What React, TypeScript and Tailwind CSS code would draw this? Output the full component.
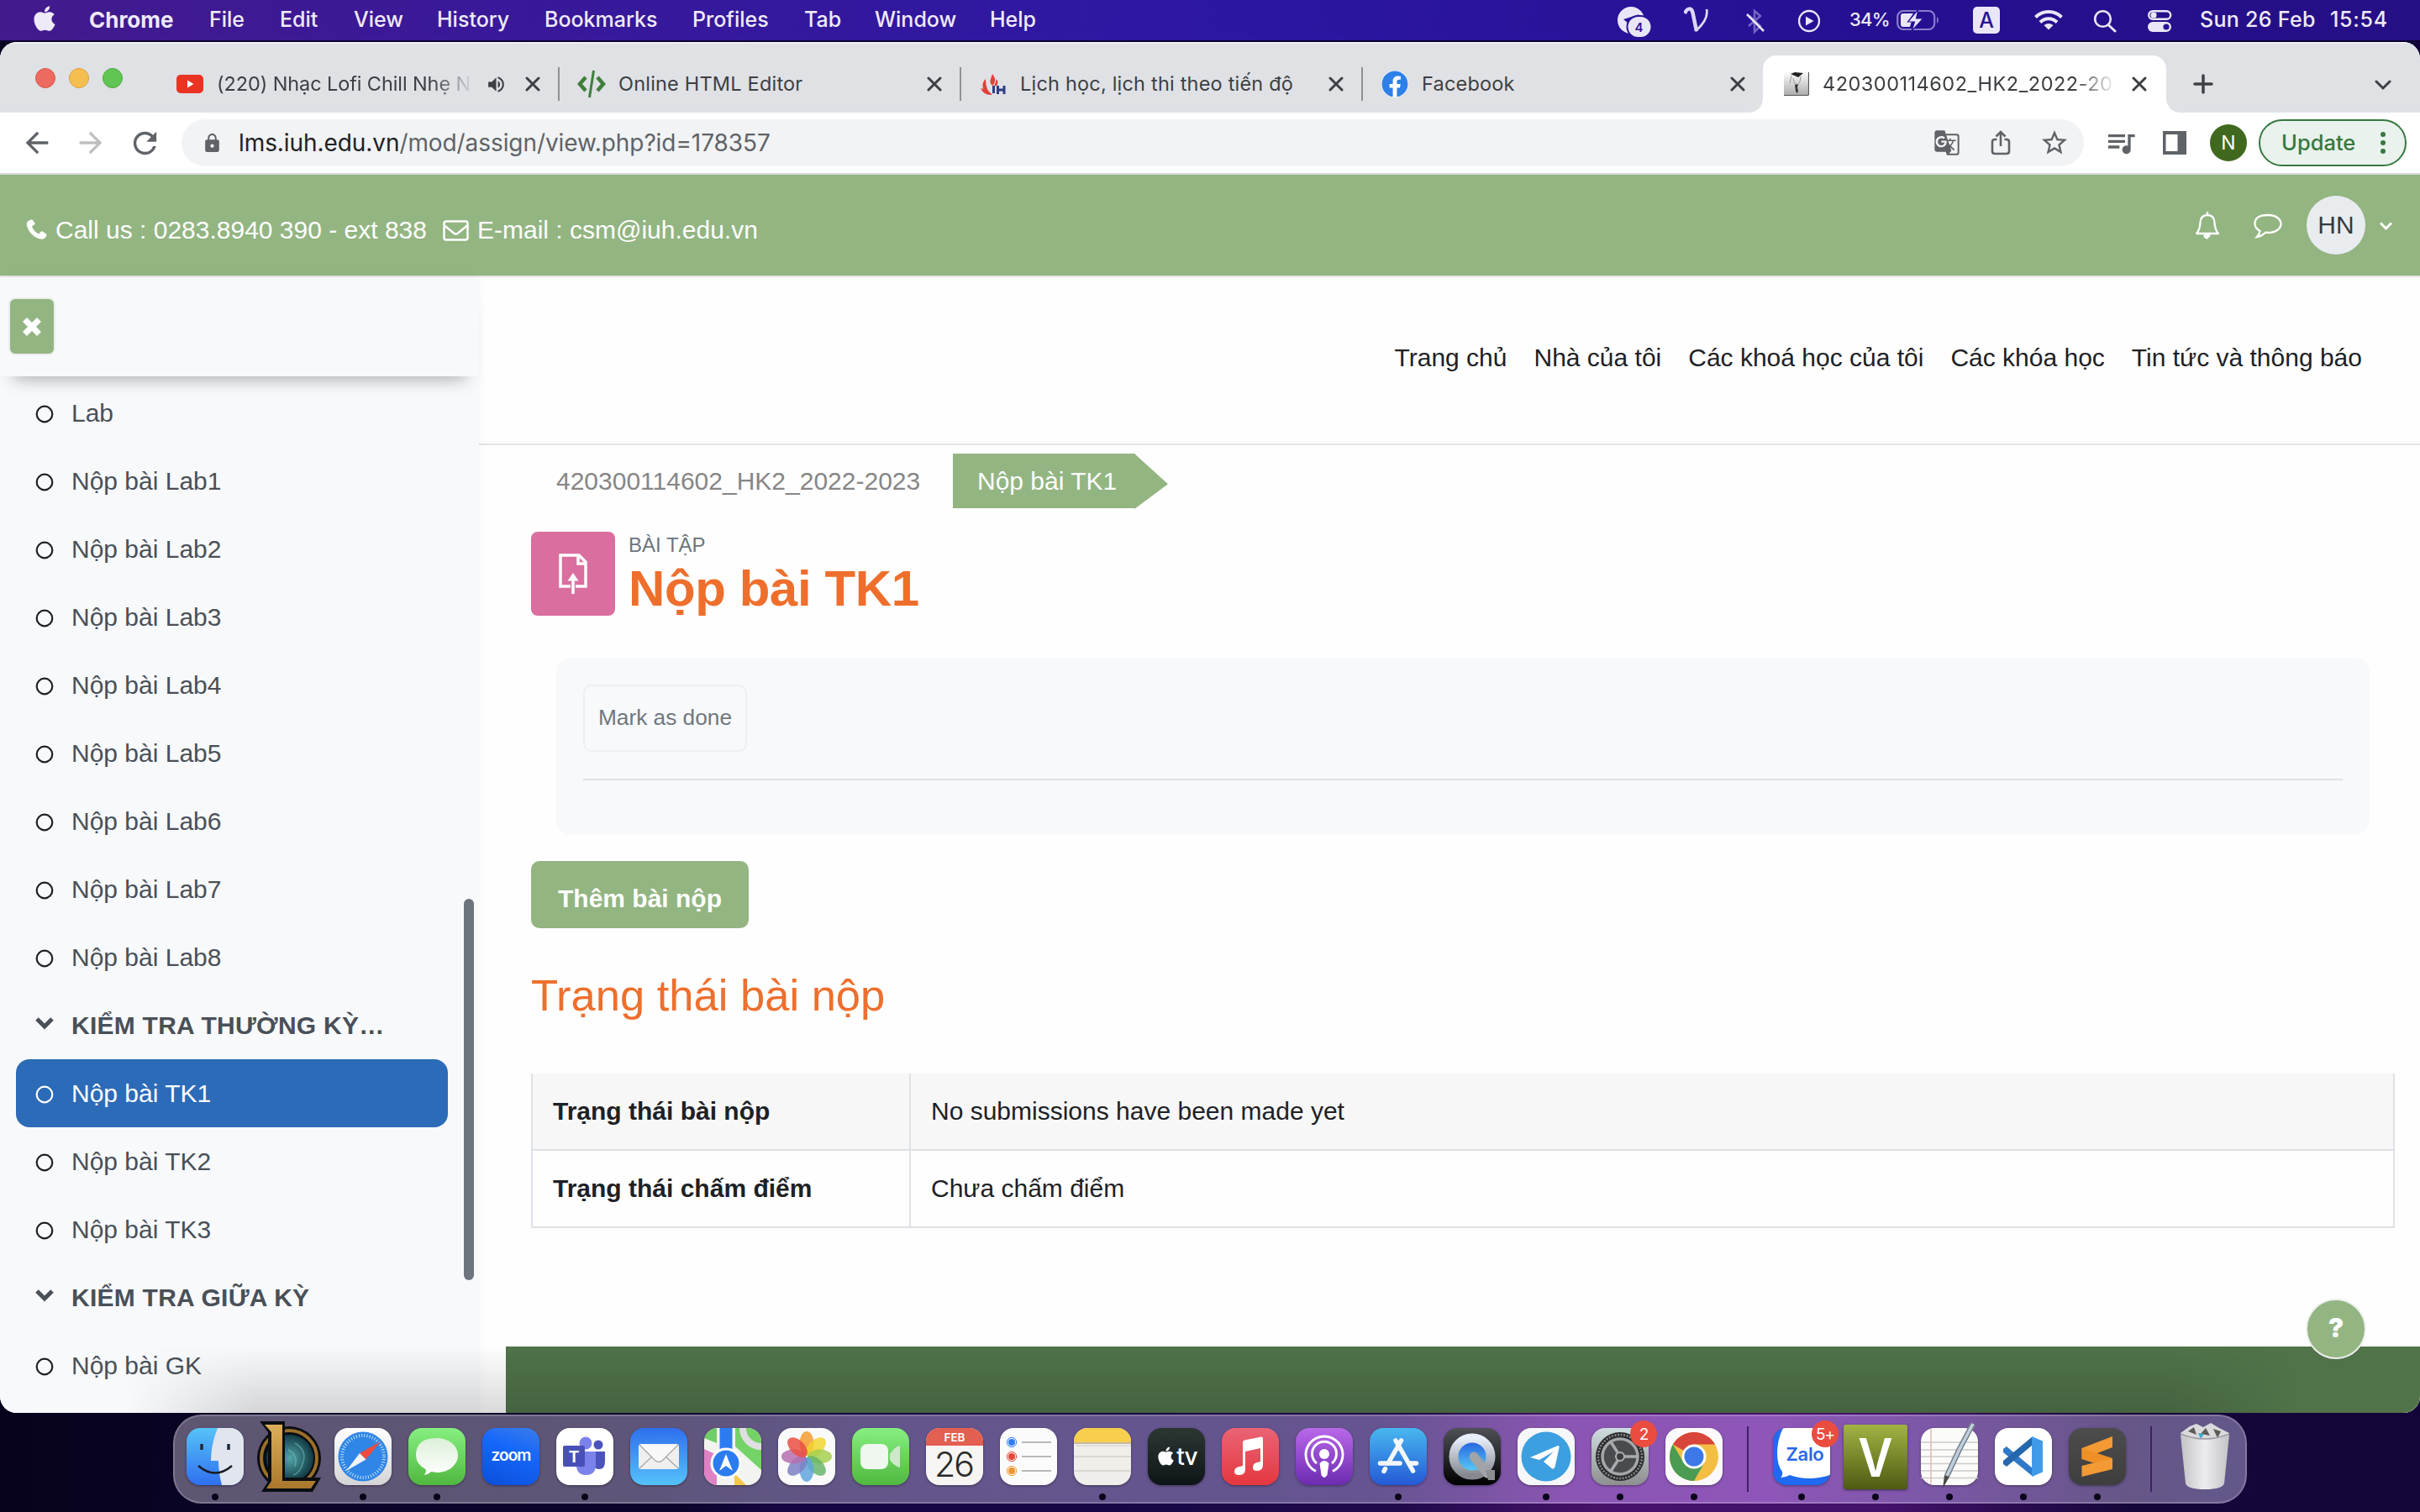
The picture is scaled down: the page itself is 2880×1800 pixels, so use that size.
import type { ReactNode } from "react";
import { FaApple, FaFacebook } from "react-icons/fa";
import { MdArrowBack, MdArrowForward, MdGTranslate, MdLock, MdQueueMusic, MdRefresh, MdStarBorder, MdVolumeUp } from "react-icons/md";

/* ---------- macOS menu bar ---------- */

const menus: { label: string; cls: string }[] = [
  { label: "File", cls: "w-[84px]" },
  { label: "Edit", cls: "w-[88px]" },
  { label: "View", cls: "w-[99px]" },
  { label: "History", cls: "w-[128px]" },
  { label: "Bookmarks", cls: "w-[176px]" },
  { label: "Profiles", cls: "w-[133px]" },
  { label: "Tab", cls: "w-[84px]" },
  { label: "Window", cls: "w-[137px]" },
  { label: "Help", cls: "w-[80px]" },
];

function MenuBar() {
  return (
    <header className="flex h-[50px] shrink-0 items-center border-b-2 border-[#0c0330] bg-[linear-gradient(90deg,#421a8c_0%,#3a1998_18%,#2c17a3_50%,#261093_75%,#250f85_100%)] pb-px font-['Inter'] text-[25px] font-medium leading-[47px] text-[#efeaf8]">
      <FaApple className="ml-[37px] -mt-[4px] h-[34px] w-[32px]" />
      <span className="ml-[37px] w-[143px] text-[26px] font-bold">Chrome</span>
      {menus.map((m) => (
        <span key={m.label} className={"whitespace-nowrap " + m.cls}>
          {m.label}
        </span>
      ))}
      <div className="ml-auto flex items-center">
        <svg className="h-[48px] w-[44px]" viewBox="0 0 44 48">
          <circle cx="17" cy="24" r="16" fill="#ebe6f7" />
          <path d="M8 23 27 17 21 22 14 28z" fill="#29149a" />
          <rect x="12.500" y="19" width="29" height="26" rx="13" fill="#ebe6f7" stroke="#29149a" strokeWidth="2" />
          <text x="26.500" y="37.500" fontSize="15" fontWeight="600" textAnchor="middle" fill="#29149a" fontFamily="Inter">4</text>
        </svg>
        <svg className="ml-[36px] h-[48px] w-[30px]" viewBox="0 0 30 48" fill="none" stroke="#ded6f5">
          <path d="M1 16C4 9 9 9 10.500 15L15 37" strokeWidth="4.500" />
          <path d="M14 37C23 29 29 20 27 11" strokeWidth="2.800" />
        </svg>
        <svg className="ml-[44px] h-[48px] w-[22px]" viewBox="0 0 22 48" fill="none" strokeWidth="2.500">
          <path d="M4 19 17 31 10 38V13l7 6L3 31" stroke="#7466c4" />
          <path d="M1 17 21 37" stroke="#ebe6f7" />
        </svg>
        <svg className="ml-[40px] h-[48px] w-[26px]" viewBox="0 0 26 48">
          <circle cx="13" cy="25" r="12" fill="none" stroke="#ebe6f7" strokeWidth="2.400" />
          <path d="M9 19.500 18.500 25 9 30.500z" fill="#ebe6f7" />
        </svg>
        <span className="ml-[35px] w-[56px] text-[22px] tracking-[-0.7px]">34%</span>
        <svg className="h-[48px] w-[52px]" viewBox="0 0 52 48">
          <rect x="1.200" y="13" width="44" height="22" rx="7" fill="none" stroke="#8a7ccd" strokeWidth="2.200" />
          <path d="M48 20q4 4 0 8z" fill="#8a7ccd" />
          <path d="M8 16h12l-6 9h4l-2 7H8q-3 0-3-3V19q0-3 3-3z" fill="#ebe6f7" />
          <path d="M26 11 13.500 26h8L18 37 31.500 22h-8z" fill="#ebe6f7" stroke="#29149a" strokeWidth="1.200" />
        </svg>
        <span className="ml-[39px] flex size-8 items-center justify-center rounded-[5px] bg-[#ebe6f7] text-[25px] leading-8 text-[#27128f]">A</span>
        <svg className="ml-[40px] h-[48px] w-[36px]" viewBox="0 0 36 48" fill="none" stroke="#ebe6f7" strokeWidth="4">
          <path d="M2.500 20.500a22 22 0 0 1 31 0M8 26.500a14 14 0 0 1 20 0" />
          <path d="M12.500 30q5.500-4 11 0L18 35.500z" fill="#ebe6f7" stroke="none" />
        </svg>
        <svg className="ml-[35px] h-[48px] w-[28px]" viewBox="0 0 28 48" fill="none" stroke="#ebe6f7" strokeWidth="2.600">
          <circle cx="11.500" cy="22.500" r="9.300" />
          <path d="m18 29.500 8 7.500" strokeLinecap="round" strokeWidth="3" />
        </svg>
        <svg className="ml-[36px] h-[48px] w-[30px]" viewBox="0 0 30 48">
          <rect x="2.200" y="13.200" width="26" height="9.600" rx="4.800" fill="none" stroke="#ebe6f7" strokeWidth="2.400" />
          <circle cx="8" cy="18" r="3.600" fill="#ebe6f7" />
          <rect x="1" y="26" width="28" height="12" rx="6" fill="#ebe6f7" />
          <circle cx="23" cy="32" r="3.600" fill="#2a149a" />
        </svg>
        <span className="ml-[33px] w-[155px] whitespace-nowrap tracking-[0.3px]">Sun 26 Feb</span>
        <span className="w-[107px] whitespace-nowrap tracking-[0.7px]">15:54</span>
      </div>
    </header>
  );
}

/* ---------- Chrome tab strip and toolbar ---------- */

function Cross() {
  return (
    <svg className="size-[18px] shrink-0" viewBox="0 0 18 18" stroke="#3c4043" strokeWidth="3" strokeLinecap="round">
      <path d="m2 2 14 14M16 2 2 16" />
    </svg>
  );
}

function Tab({ icon, title, fade, audio }: { icon: ReactNode; title: string; fade?: boolean; audio?: boolean }) {
  return (
    <div className="flex h-full w-[478px] items-center pl-[23px] pr-[22px]">
      <span className="flex size-8 shrink-0 items-center justify-center">{icon}</span>
      <span
        className={
          "ml-[16px] min-w-0 flex-1 whitespace-nowrap " +
          (fade ? "tracking-[-0.1px] [mask-image:linear-gradient(90deg,#000_calc(100%-50px),transparent)]" : "tracking-[0.2px]")
        }
      >
        {title}
      </span>
      {audio && <MdVolumeUp className="ml-[14px] mr-[22px] size-[25px] shrink-0 text-[#3c4043]" />}
      <span className={audio ? "flex" : "ml-[17px] flex"}>
        <Cross />
      </span>
    </div>
  );
}

const Divider = () => <span className="-mx-px h-10 w-[2px] bg-[#8f9195]" />;

function TabStrip() {
  return (
    <div className="flex h-[84px] shrink-0 border-t-2 border-[#f0f1f3] bg-[#dfe1e5] font-['Inter'] text-[23.5px] text-[#3c4043]">
      <div className="flex w-[187px] items-start gap-4 pl-[42px] pt-[29px]">
        <span className="size-6 rounded-full border border-[#d65a50] bg-[#ed6a5f]" />
        <span className="size-6 rounded-full border border-[#d8a13f] bg-[#f5bf4f]" />
        <span className="size-6 rounded-full border border-[#52a93f] bg-[#61c554]" />
      </div>
      <div className="mt-[14px] flex h-[68px] items-center">
        <Tab
          title="(220) Nhạc Lofi Chill Nhẹ N"
          fade
          audio
          icon={
            <svg className="h-[22px] w-8" viewBox="0 0 32 22">
              <rect width="32" height="22" rx="5" fill="#ea3323" />
              <path d="M13 6.500 20.500 11 13 15.500z" fill="#fff" />
            </svg>
          }
        />
        <Divider />
        <Tab
          title="Online HTML Editor"
          icon={
            <svg className="size-8 overflow-visible" viewBox="0 0 32 32" fill="none" stroke="#3f7f3c" strokeWidth="4.500">
              <path d="m9 8-7 8 7 8M23 8l7 8-7 8" />
              <path d="M18.500 0 13.500 32" strokeWidth="3" />
            </svg>
          }
        />
        <Divider />
        <Tab
          title="Lịch học, lịch thi theo tiến độ"
          icon={
            <svg className="size-8" viewBox="0 0 32 32">
              <path d="M15 4q4 5 3 9t-3 5q-4-4-2-8zM7 10q0 12 5 16l3 3Q5 30 1 21l3 1Q2 14 7 10zM20 10q3 4 0 8l-3 1z" fill="#e2403a" />
              <rect x="15" y="18" width="3" height="9" fill="#2d3d86" />
              <path d="M21.500 18v10M29 18v10M21 23h8" stroke="#2d3d86" strokeWidth="3" />
            </svg>
          }
        />
        <Divider />
        <Tab title="Facebook" icon={<FaFacebook className="size-8 rounded-full bg-white text-[#2d80e8]" />} />
        <div className="relative -ml-px flex h-[68px] w-[480px] items-center rounded-t-[16px] bg-white pl-[25px] pr-[23px]">
          <span className="absolute -left-4 bottom-0 size-4 bg-[radial-gradient(circle_at_0_0,transparent_15.5px,#fff_16px)]" />
          <span className="absolute -right-4 bottom-0 size-4 bg-[radial-gradient(circle_at_100%_0,transparent_15.5px,#fff_16px)]" />
          <svg className="h-[30px] w-[30px] shrink-0" viewBox="0 0 30 30">
            <defs>
              <linearGradient id="favicon" x2="0" y2="1">
                <stop stopColor="#fff" />
                <stop offset="1" stopColor="#aaa" />
              </linearGradient>
            </defs>
            <rect width="30" height="29" rx="2" fill="url(#favicon)" />
            <path d="M0 28.500h28q1.500 0 1.500-2V1" fill="none" stroke="#555" strokeWidth="1.200" />
            <path d="m8 3 5-2 10 1-6 5z" fill="#222" />
            <path d="M9 5 7 14M20 6q0 6-3 9M11 8q1 5 3 8" fill="none" stroke="#999" />
            <path d="m13 16 4-1-1 4 1 5-2 2-1-3z" fill="#333" />
          </svg>
          <span className="ml-[16px] w-[350px] whitespace-nowrap tracking-[0.5px] [mask-image:linear-gradient(90deg,#000_calc(100%-50px),transparent)]">
            420300114602_HK2_2022-20
          </span>
          <span className="ml-auto flex">
            <Cross />
          </span>
        </div>
      </div>
      <svg className="ml-[32px] mt-[36px] size-6" viewBox="0 0 24 24" stroke="#3c4043" strokeWidth="3.500" strokeLinecap="round">
        <path d="M12 2v20M2 12h20" />
      </svg>
      <svg className="ml-auto mr-[34px] mt-[42px] h-[14px] w-[20px]" viewBox="0 0 20 14" fill="none" stroke="#3c4043" strokeWidth="3" strokeLinecap="round">
        <path d="m2 3 8 8 8-8" />
      </svg>
    </div>
  );
}

function Toolbar() {
  return (
    <div className="flex h-[74px] shrink-0 items-center border-b-2 border-[#d9dadb] bg-white pr-[16px] font-['Inter'] text-[#5f6368]">
      <MdArrowBack className="ml-[24px] size-[40px]" />
      <MdArrowForward className="ml-[24px] size-[40px] text-[#bdbfc1]" />
      <MdRefresh className="ml-[24px] size-[41px]" />
      <div className="ml-[23px] flex h-14 w-[2264px] items-center rounded-full bg-[#f1f3f4] pl-[24px]">
        <MdLock className="size-[25px]" />
        <span className="ml-[19px] text-[28px] leading-none tracking-[-0.08px]">
          <span className="text-[#202124]">lms.iuh.edu.vn</span>/mod/assign/view.php?id=178357
        </span>
        <MdGTranslate className="ml-auto size-[32px]" />
        <svg className="ml-[36px] h-[30px] w-[24px]" viewBox="0 0 24 30" fill="none" stroke="#5f6368" strokeWidth="2.600">
          <path d="M7.500 11H5q-3 0-3 3v11q0 3 3 3h14q3 0 3-3V14q0-3-3-3h-2.500M12 19V3M6.500 7.500 12 2l5.500 5.500" />
        </svg>
        <MdStarBorder className="ml-[34px] mr-[17px] size-[36px]" />
      </div>
      <MdQueueMusic className="ml-[24px] size-[40px]" />
      <svg className="ml-[30px] h-7 w-7" viewBox="0 0 28 28">
        <path d="M0 0h28v28H0zM3.500 4v20H17.500V4z" fill="#5f6368" fillRule="evenodd" />
      </svg>
      <span className="ml-[28px] flex size-11 items-center justify-center rounded-full bg-[#40691f] text-[23px] text-white">N</span>
      <div className="ml-auto flex h-14 w-[176px] items-center rounded-full border-2 border-[#37783f] bg-[#e9f2ec] pl-[25px] pr-[23px] text-[25.5px] font-medium text-[#37783f]">
        Update
        <svg className="ml-auto h-[28px] w-[6px]" viewBox="0 0 6 28" fill="#37783f">
          <circle cx="3" cy="4" r="3" />
          <circle cx="3" cy="14" r="3" />
          <circle cx="3" cy="24" r="3" />
        </svg>
      </div>
    </div>
  );
}

/* ---------- LMS page ---------- */

function SiteHeader() {
  return (
    <div className="flex h-[122px] shrink-0 items-center border-b-2 border-[#e8e2e0] bg-[#93b582] text-[30px] leading-none text-white">
      <svg className="ml-[31px] mt-[10px] size-[26px]" viewBox="0 0 26 26" fill="#fff">
        <path d="M6 1.500 2.500 3Q0 5 1 9q3 11 14 15 5 2 8-1l1.500-3q.5-1-1-2l-5-3-3.500 3.500q-6-3-8-9L11 6.500 8 2Q7 1 6 1.500z" />
      </svg>
      <span className="ml-[9px] mt-[11px] whitespace-nowrap">Call us : 0283.8940 390 - ext 838</span>
      <svg className="ml-[19px] mt-[12px] h-[25px] w-[31px]" viewBox="0 0 31 25" fill="none" stroke="#fff" strokeWidth="2.500">
        <rect x="1.500" y="1.500" width="28" height="22" rx="2.500" />
        <path d="m2 6.500 11 9q2.500 2 5 0l11-9" />
      </svg>
      <span className="ml-[10px] mt-[11px] whitespace-nowrap">E-mail : csm@iuh.edu.vn</span>
      <svg className="ml-auto h-[34px] w-[30px]" viewBox="0 0 30 34" fill="none" stroke="#fff" strokeWidth="2.300">
        <path d="M2 27q4-4 4.500-13Q7 5 15 5t8.500 9q.5 9 4.500 13z" strokeLinejoin="round" />
        <path d="M15 1v4M11.500 28.500q0 4 4 4" />
        <path d="M11.500 28h7q0 4-3.500 4.500z" fill="#fff" stroke="none" />
      </svg>
      <svg className="ml-[40px] mt-[2px] h-[30px] w-[34px]" viewBox="0 0 34 30" fill="none" stroke="#fff" strokeWidth="2.300">
        <path d="M17 2c9 0 15.500 4.500 15.500 10.500S26 23 17 23l-3-.3Q10 27 4 28q3-3.500 3.500-7Q1.500 17.500 1.500 12.500 1.500 2 17 2z" />
      </svg>
      <span className="ml-[29px] flex size-[70px] items-center justify-center rounded-full bg-[#e9ecef] text-[#343a40]">HN</span>
      <svg className="ml-[17px] mr-[33px] mt-[3px] h-[11px] w-[15px]" viewBox="0 0 15 11" fill="none" stroke="#fff" strokeWidth="3">
        <path d="m1 1.500 6.500 6.500L14 1.500" />
      </svg>
    </div>
  );
}

type Entry = { label: string; kind: "item" | "section" | "active" };

const entries: Entry[] = [
  { label: "Lab", kind: "item" },
  { label: "Nộp bài Lab1", kind: "item" },
  { label: "Nộp bài Lab2", kind: "item" },
  { label: "Nộp bài Lab3", kind: "item" },
  { label: "Nộp bài Lab4", kind: "item" },
  { label: "Nộp bài Lab5", kind: "item" },
  { label: "Nộp bài Lab6", kind: "item" },
  { label: "Nộp bài Lab7", kind: "item" },
  { label: "Nộp bài Lab8", kind: "item" },
  { label: "KIỂM TRA THƯỜNG KỲ…", kind: "section" },
  { label: "Nộp bài TK1", kind: "active" },
  { label: "Nộp bài TK2", kind: "item" },
  { label: "Nộp bài TK3", kind: "item" },
  { label: "KIỂM TRA GIỮA KỲ", kind: "section" },
  { label: "Nộp bài GK", kind: "item" },
];

function Row({ label, kind }: Entry) {
  const tone =
    kind === "active"
      ? "bg-[#2c6bb8] text-white"
      : kind === "section"
        ? "font-bold tracking-[0.25px] text-[#495057]"
        : "text-[#495057]";
  return (
    <li className={"flex h-[81px] w-[514px] items-center rounded-[16px] pl-[22px] " + tone}>
      {kind === "section" ? (
        <svg className="mt-[-6px] h-[16px] w-[24px]" viewBox="0 0 24 16" fill="none" stroke="#495057" strokeWidth="5">
          <path d="m3 3 9 9 9-9" />
        </svg>
      ) : (
        <svg className="mt-[3px] size-6" viewBox="0 0 24 24" fill="none" stroke={kind === "active" ? "#fff" : "#1d2125"} strokeWidth="2.200">
          <circle cx="12" cy="12" r="9.300" />
        </svg>
      )}
      <span className="ml-[20px] whitespace-nowrap">{label}</span>
    </li>
  );
}

function Sidebar() {
  return (
    <aside className="relative z-10 flex w-[570px] shrink-0 flex-col bg-[#f8f9fb] shadow-[0_0_12px_rgba(0,0,0,0.04)]">
      <div className="h-[118px] shrink-0 pl-[10px] pt-[24px] shadow-[0_18px_20px_-16px_rgba(0,0,0,0.35)]">
        <span className="flex h-[69px] w-[56px] items-center justify-center rounded-[8px] border-2 border-[#eeeeee] bg-[#93b582]">
          <svg className="size-[22px]" viewBox="0 0 22 22" stroke="#fff" strokeWidth="7">
            <path d="m2.500 2.500 17 17M19.500 2.500l-17 17" />
          </svg>
        </span>
      </div>
      <ul className="mt-[3px] flex flex-col pl-[19px] text-[30px] leading-none">
        {entries.map((e) => (
          <Row key={e.label} {...e} />
        ))}
      </ul>
      <span className="absolute left-[552px] top-[740px] h-[454px] w-[12px] rounded-full bg-[#6c757d]" />
    </aside>
  );
}

const status: [string, string][] = [
  ["Trạng thái bài nộp", "No submissions have been made yet"],
  ["Trạng thái chấm điểm", "Chưa chấm điểm"],
];

function Content() {
  return (
    <main className="flex min-w-0 flex-1 flex-col bg-[#fefefe]">
      <nav className="flex h-[200px] shrink-0 items-center justify-end gap-[32px] border-b-2 border-[#e4e4e4] pb-[7px] pr-[69px] text-[30px] leading-none text-[#1d2125]">
        <span>Trang chủ</span>
        <span>Nhà của tôi</span>
        <span>Các khoá học của tôi</span>
        <span>Các khóa học</span>
        <span>Tin tức và thông báo</span>
      </nav>
      <div className="mt-[10px] flex h-[65px] pl-[92px] text-[30px] leading-[65px]">
        <span className="w-[472px] text-[#868686]">420300114602_HK2_2022-2023</span>
        <span className="w-[217px] bg-[#93b582] pl-[29px] text-white">Nộp bài TK1</span>
        <span className="-ml-px h-[66px] w-[40px] bg-[#93b582] [clip-path:polygon(0_0,100%_55%,0_100%)]" />
      </div>
      <div className="mt-[28px] flex pl-[62px]">
        <span className="flex size-[100px] items-center justify-center rounded-[8px] bg-[#da6e9f]">
          <svg className="h-[48px] w-[34px] overflow-visible" viewBox="0 0 34 48" fill="none" stroke="#fff" strokeWidth="3.500">
            <path d="M14 39H2V2h22l8 8v29H20M23 2v10h9" />
            <path d="M17 48V28" />
            <path d="M17 23l6.500 9.500h-13z" fill="#fff" stroke="none" />
          </svg>
        </span>
        <div className="ml-[16px]">
          <p className="mt-[2px] text-[24px] leading-[28px] text-[#6c757d]">BÀI TẬP</p>
          <h1 className="mt-[2px] text-[60px] font-bold leading-[71px] tracking-[-0.4px] text-[#ee6f2d]">Nộp bài TK1</h1>
        </div>
      </div>
      <section className="ml-[92px] mr-[60px] mt-[47px] flex h-[210px] shrink-0 flex-col rounded-[16px] bg-[#f8f9fb] px-[32px] pt-[32px]">
        <button className="h-[80px] w-[195px] rounded-[10px] border-2 border-[#eeeff1] pb-[2px] text-[26.25px] leading-none text-[#6f777f]">Mark as done</button>
        <hr className="mt-[32px] border-0 border-t-2 border-[#dfe2e5]" />
      </section>
      <button className="ml-[62px] mt-[32px] h-[80px] w-[259px] shrink-0 rounded-[10px] bg-[#93b582] pt-[9px] text-[30px] font-bold leading-none text-white">Thêm bài nộp</button>
      <h2 className="ml-[62px] mt-[48px] text-[52.5px] leading-[64px] text-[#ee6f2d]">Trạng thái bài nộp</h2>
      <div className="ml-[62px] mr-[30px] mt-[61px] shrink-0 text-[30px] text-[#1d2125]">
        {status.map(([name, value], i) => (
          <div
            key={name}
            className={"flex h-[92px] border-x-2 border-b-2 border-[#dee2e6] leading-[90px] " + (i === 0 ? "bg-[#f7f7f7]" : "bg-[#fefefe]")}
          >
            <span className="w-[450px] border-r-2 border-[#dee2e6] pl-[24px] font-bold">{name}</span>
            <span className="pl-[24px]">{value}</span>
          </div>
        ))}
      </div>
      <footer className="relative ml-[32px] mt-auto h-[79px] shrink-0 bg-[#50734a]">
        <span className="absolute -top-[57px] right-[64px] flex size-[72px] items-center justify-center rounded-full border-2 border-[#eeeeee] bg-[#93b582] pb-px font-['Inter'] text-[31px] font-black text-white">?</span>
      </footer>
    </main>
  );
}

/* ---------- Dock ---------- */

function Tile({ bg, children }: { bg: string; children?: ReactNode }) {
  return (
    <span className={"relative flex size-[68px] items-center justify-center overflow-hidden rounded-[16px] shadow-[0_1px_3px_rgba(0,0,0,0.4)] " + bg}>
      {children}
    </span>
  );
}

const art = "size-[68px] shrink-0";

const Finder = () => (
  <Tile bg="bg-[linear-gradient(#56c3f8,#2f6ff0)]">
    <svg className={art} viewBox="0 0 68 68" fill="none">
      <path d="M37 0Q29 20 29 39h9q0 14 4 29h26V0z" fill="#e1e5ee" />
      <path d="M18 19v7M50 19v7" stroke="#1c2a3c" strokeWidth="3.500" />
      <path d="M14 45q20 17 40 0" stroke="#1c1c22" strokeWidth="2.500" />
    </svg>
  </Tile>
);

const League = () => (
  <svg className="h-[84px] w-[78px] shrink-0" viewBox="0 0 78 84">
    <defs>
      <linearGradient id="gold" x2="0" y2="1">
        <stop stopColor="#dcae5a" />
        <stop offset="1" stopColor="#a9782c" />
      </linearGradient>
      <radialGradient id="teal">
        <stop stopColor="#52a6a9" />
        <stop offset="1" stopColor="#123a44" />
      </radialGradient>
    </defs>
    <circle cx="39" cy="44" r="38" fill="#0b0e12" />
    <circle cx="39" cy="44" r="33" fill="none" stroke="#9a6f2b" strokeWidth="4" />
    <circle cx="40" cy="44" r="28" fill="url(#teal)" />
    <path d="M46 26q14 8 10 22t-12 16M38 34q12 6 8 20" fill="none" stroke="#7cc9c6" strokeWidth="1.500" opacity="0.5" />
    <path d="M4 0h30v67h43l-10 17H6l8-12V13z" fill="#0b0e12" />
    <path d="M10 4h21v67h40l-6 9H12l6-9V13z" fill="url(#gold)" />
  </svg>
);

const Safari = () => (
  <Tile bg="bg-[linear-gradient(#fff,#d4d4d6)]">
    <svg className={art} viewBox="0 0 68 68">
      <circle cx="34" cy="34" r="29.500" fill="#2f86e6" />
      <circle cx="34" cy="34" r="25" fill="none" stroke="#bfe0fa" strokeWidth="4" strokeDasharray="1 2.200" />
      <path d="M55 16 37.500 37.500 30 30z" fill="#ee4b3e" />
      <path d="M14 51 30 30l7.500 7.500z" fill="#f4f4f4" />
    </svg>
  </Tile>
);

const Messages = () => (
  <Tile bg="bg-[linear-gradient(#86ef80,#50b83f)]">
    <svg className={art} viewBox="0 0 68 68">
      <defs>
        <linearGradient id="bubble" x2="0" y2="1">
          <stop stopColor="#dcf0d8" />
          <stop offset="1" stopColor="#fff" />
        </linearGradient>
      </defs>
      <path d="M34 12c14 0 25 9 25 20.500S48 53 34 53l-7-1q-3 3-8 4 2-3 2-6.500Q9 43 9 32.500 9 12 34 12z" fill="url(#bubble)" />
    </svg>
  </Tile>
);

const Zoom = () => (
  <Tile bg="bg-[linear-gradient(20deg,#0b4fd8,#1567fb_60%,#3a7de8)]">
    <span className="pb-[2px] font-['Inter'] text-[19px] font-semibold tracking-[-0.9px] text-white">zoom</span>
  </Tile>
);

const Teams = () => (
  <Tile bg="bg-white">
    <svg className={art} viewBox="0 0 68 68">
      <circle cx="50" cy="20" r="5.500" fill="#4b53bc" />
      <path d="M43 28h15v12q0 9-7 9t-8-9z" fill="#4b53bc" />
      <circle cx="35" cy="18" r="7.500" fill="#7b83eb" />
      <path d="M24 28h23v16q0 12-11.500 12T24 44z" fill="#7b83eb" />
      <rect x="8" y="21" width="26" height="25" rx="2" fill="#4850b8" />
      <text x="21" y="40.500" fontSize="19" fontWeight="700" textAnchor="middle" fill="#fff" fontFamily="Inter">T</text>
    </svg>
  </Tile>
);

const Mail = () => (
  <Tile bg="bg-[linear-gradient(#2f6fee,#55c2fa)]">
    <svg className={art} viewBox="0 0 68 68" stroke="#a9a9a9" strokeWidth="1.300">
      <rect x="10" y="19" width="48" height="30" rx="3" fill="#efefef" stroke="none" />
      <path d="m11 48 17-16M57 48 40 32" />
      <path d="m11 20 19 19q4 3 8 0l19-19" fill="#f8f8f8" />
    </svg>
  </Tile>
);

const Maps = () => (
  <Tile bg="bg-[#f3f3f0]">
    <svg className={art} viewBox="0 0 68 68" fill="none">
      <path d="M0 0h15v18L0 12z" fill="#6fcf62" />
      <path d="M37 0h31v50L37 22z" fill="#74d366" />
      <path d="M0 25 15 32v36H0z" fill="#df82c4" />
      <path d="M36 68V54L50 68z" fill="#f6c845" />
      <circle cx="68" cy="0" r="22" stroke="#dfdfe2" strokeWidth="8" />
      <path d="M26 0v40" stroke="#2c7cf0" strokeWidth="15" />
      <circle cx="26" cy="42" r="17" fill="#2c7cf0" stroke="#fff" strokeWidth="3" />
      <path d="m26 31 8 20-8-6-8 6z" fill="#fff" />
    </svg>
  </Tile>
);

const petals = ["#f49a2e", "#f1d32f", "#a5cf4f", "#67b56a", "#5fa5dd", "#7c7fc4", "#b56fae", "#ea4f43"];
const Photos = () => (
  <Tile bg="bg-[#fafafa]">
    <svg className={art} viewBox="0 0 68 68">
      {petals.map((c, i) => (
        <ellipse key={c} cx="34" cy="18.500" rx="8.500" ry="14.500" fill={c} opacity="0.85" transform={`rotate(${i * 45} 34 34)`} />
      ))}
    </svg>
  </Tile>
);

const FaceTime = () => (
  <Tile bg="bg-[linear-gradient(#86ef80,#50b83f)]">
    <svg className={art} viewBox="0 0 68 68" fill="#eff7ee">
      <rect x="10" y="19" width="33" height="30" rx="8" />
      <path d="M45 31q6-9 12-10v26q-6-1-12-9z" fill="#cfe8cb" />
    </svg>
  </Tile>
);

const Calendar = () => (
  <Tile bg="bg-[#f6f5f3]">
    <svg className={art} viewBox="0 0 68 68" fontFamily="Inter" textAnchor="middle">
      <path d="M0 0h68v21H0z" fill="#e25f51" />
      <text x="34" y="16" fontSize="13.500" fontWeight="600" fill="#fff">FEB</text>
      <text x="33" y="58" fontSize="41" fontWeight="300" letterSpacing="-2" fill="#2a2a2a">26</text>
    </svg>
  </Tile>
);

const Reminders = () => (
  <Tile bg="bg-[#fbfbfb]">
    <svg className={art} viewBox="0 0 68 68">
      {["#2f7df3", "#e5473a", "#ee962f"].map((c, i) => (
        <g key={c} transform={`translate(0 ${17 + i * 17})`}>
          <circle cx="14" r="4" fill={c} />
          <circle cx="14" r="5.600" fill="none" stroke={c} strokeWidth="1" />
          <path d="M26 0h35" stroke="#b9b9b9" strokeWidth="2" />
        </g>
      ))}
    </svg>
  </Tile>
);

const Notes = () => (
  <Tile bg="bg-[#f0eeea]">
    <svg className={art} viewBox="0 0 68 68">
      <path d="M0 0h68v17H0z" fill="#f8cf4c" />
      <path d="M0 18h68" stroke="#b8a984" strokeWidth="1.500" />
      <path d="M3 21h65" stroke="#b5b0a5" strokeDasharray="1.500 1.500" />
      <path d="M0 34h68M0 51h68" stroke="#d3d0ca" strokeWidth="1.500" />
    </svg>
  </Tile>
);

const AppleTV = () => (
  <Tile bg="bg-[linear-gradient(#2c3733,#0f1517)]">
    <FaApple className="mb-[2px] size-[25px] text-white" />
    <span className="font-['Inter'] text-[28px] font-medium leading-none tracking-[-0.8px] text-white">tv</span>
  </Tile>
);

const Music = () => (
  <Tile bg="bg-[linear-gradient(#ea6475,#e5373f)]">
    <svg className={art} viewBox="0 0 68 68" fill="#fff">
      <path d="M25 17q0-2 2-2.500l20-4q2 0 2 2V44q0 7-7 7-5 0-5-4 0-5 5-6l4-1V24l-18 4v21q0 7-7 7-6 0-6-4 0-5 6-6l4-1z" />
    </svg>
  </Tile>
);

const Podcasts = () => (
  <Tile bg="bg-[linear-gradient(#b968ea,#6c2bb0)]">
    <svg className={art} viewBox="0 0 68 68" fill="none" stroke="#fff" strokeWidth="3">
      <path d="M24 51.500a22 22 0 1 1 20 0" />
      <path d="M25 42a14.500 14.500 0 1 1 18 0" />
      <circle cx="34" cy="31" r="6" fill="#fff" stroke="none" />
      <path d="M28.500 42q5.500-6 11 0l-2 14q-3.500 6-7 0z" fill="#fff" stroke="none" />
    </svg>
  </Tile>
);

const AppStore = () => (
  <Tile bg="bg-[linear-gradient(#48b7ef,#2459d6)]">
    <svg className={art} viewBox="0 0 68 68" stroke="#f3f7fc" strokeWidth="5.500" strokeLinecap="round">
      <path d="M37.500 15 22 42M31 15l20.500 36M18.500 48.500l-1.500 3M12.500 42H36M47.500 42h8" />
    </svg>
  </Tile>
);

const QuickTime = () => (
  <Tile bg="bg-[linear-gradient(#4f5156,#000)]">
    <svg className={art} viewBox="0 0 68 68" fill="none">
      <defs>
        <linearGradient id="qt" x2="0" y2="1">
          <stop stopColor="#e8effc" />
          <stop offset="1" stopColor="#85888f" />
        </linearGradient>
        <linearGradient id="qtIn" x2="0" y2="1">
          <stop stopColor="#2057dc" />
          <stop offset="1" stopColor="#5fd8f7" />
        </linearGradient>
      </defs>
      <circle cx="34" cy="34" r="22" fill="url(#qtIn)" stroke="url(#qt)" strokeWidth="11" />
      <path d="M36 34 52 54" stroke="#a0a3a8" strokeWidth="11" strokeLinecap="round" />
      <path d="M50 50h11v12h-8z" fill="#8c8e92" />
    </svg>
  </Tile>
);

const Telegram = () => (
  <Tile bg="bg-[#f6f7f9]">
    <svg className={art} viewBox="0 0 68 68">
      <circle cx="34" cy="34" r="29.500" fill="#3c9fe0" />
      <path d="M15 35 48 21q2 0 1.500 2.500l-5 23q-1 3-4 1.500L31 40l12-12-17 10z" fill="#fff" />
    </svg>
  </Tile>
);

const Settings = () => (
  <Tile bg="bg-[linear-gradient(#cfdde0,#8e8e8e)]">
    <svg className={art} viewBox="0 0 68 68" fill="none">
      <circle cx="34" cy="34" r="29" fill="#2b2c2e" />
      <circle cx="34" cy="34" r="26" stroke="#8e9093" strokeWidth="2.500" strokeDasharray="1.800 1.800" />
      <circle cx="34" cy="34" r="21" fill="#4a4b4e" stroke="#a4a6aa" strokeWidth="3.500" />
      <circle cx="34" cy="34" r="5" fill="#3c3d40" stroke="#b0b2b6" strokeWidth="2" />
      <path d="m31 29-9-14M31 39l-9 14M39 34h16" stroke="#a9abaf" strokeWidth="3.500" />
    </svg>
  </Tile>
);

const Chrome = () => (
  <Tile bg="bg-[#fbf9fb]">
    <svg className={art} viewBox="0 0 68 68">
      <circle cx="34" cy="34" r="29" fill="#f3be42" />
      <path d="M34 34 8.900 19.500A29 29 0 0 1 59.100 19.500H34z" fill="#d8453a" />
      <path d="M8.900 19.500A29 29 0 0 0 34 63L46.500 41 34 34 21.500 41z" fill="#4b9b52" />
      <circle cx="34" cy="34" r="14.500" fill="#fff" />
      <circle cx="34" cy="34" r="11.500" fill="#3c78e8" />
    </svg>
  </Tile>
);

const Zalo = () => (
  <Tile bg="bg-[#1f6af0]">
    <svg className={art} viewBox="0 0 68 68">
      <path d="M12 0Q5 14 5 30q0 14 6 22 1 4-2 7 6 0 11-3 22 8 48 0V0z" fill="#fff" />
      <text x="38" y="39" fontSize="22" fontWeight="600" textAnchor="middle" fill="#2a68e8" fontFamily="Inter" letterSpacing="-0.300">Zalo</text>
    </svg>
  </Tile>
);

const VKey = () => (
  <span className="flex h-[77px] w-[76px] shrink-0 items-center justify-center rounded-[3px] bg-[linear-gradient(#a2b343,#4e5b13)] shadow-[0_1px_3px_rgba(0,0,0,0.5)]">
    <span className="scale-x-90 pt-[3px] font-['Inter'] text-[63px] font-semibold leading-none text-white">V</span>
  </span>
);

const TextEdit = () => (
  <Tile bg="overflow-visible! bg-[#fbfbfa]">
    <svg className="size-[68px] shrink-0 overflow-visible" viewBox="0 0 68 68" fill="none">
      <path d="M0 17h68M0 26h68M0 34h68M0 42.500h68M0 51h68M0 59.500h68" stroke="#cbcbcb" strokeWidth="1.500" />
      <path d="M12 1v66" stroke="#e9b7b3" strokeWidth="1.500" />
      <path d="M62-5 46 25 31 57" stroke="#77808a" strokeWidth="6.500" />
      <path d="M62-5 46 25 31 57" stroke="#c0d0df" strokeWidth="3.500" />
      <path d="m28 56 6 2-8 14z" fill="#4b4b4e" />
    </svg>
  </Tile>
);

const VSCode = () => (
  <Tile bg="bg-white">
    <svg className={art} viewBox="0 0 68 68">
      <path d="m10 25 4-3 31 26v9.500L10 29z" fill="#2f79c8" />
      <path d="M45 10 10 39v4l4 3 31-26z" fill="#2467ab" />
      <path d="m44 10 13 5.500v37L44 58z" fill="#3f9bea" />
    </svg>
  </Tile>
);

const Sublime = () => (
  <Tile bg="bg-[linear-gradient(#4c4c4c,#3e3e3e)]">
    <svg className={art} viewBox="0 0 68 68" fill="#f39a34">
      <path d="M15.500 24 52 10v13L15.500 37z" />
      <path d="m15.500 24 36.500 12v13L15.500 37z" fill="#ee9026" />
      <path d="M52 36v13L15.500 58V45z" />
    </svg>
  </Tile>
);

const Trash = () => (
  <svg className="h-[80px] w-[64px] shrink-0" viewBox="0 0 64 80">
    <defs>
      <linearGradient id="bin">
        <stop stopColor="#c3c3c7" />
        <stop offset="0.5" stopColor="#ececee" />
        <stop offset="1" stopColor="#c3c3c7" />
      </linearGradient>
    </defs>
    <path d="M3 12 14 4l8-3 8 4 9-5 10 6 12 6-6 10H8z" fill="#d9dadc" />
    <path d="m12 10 7-5 3 9zM27 13l6-7 5 9zM42 7l9 3-4 8z" fill="#5e5c58" />
    <path d="m24 12 7 1-4 6z" fill="#45a7c9" />
    <path d="M3 14q29 12 58 0l-6 58q-2 7-23 7T9 72z" fill="url(#bin)" />
    <path d="M3 13q29 12 58 0" fill="none" stroke="#9b9ba2" strokeWidth="1.500" />
  </svg>
);

type App = { Icon: () => ReactNode; dot?: boolean; badge?: string };

const apps: App[] = [
  { Icon: Finder, dot: true },
  { Icon: League },
  { Icon: Safari, dot: true },
  { Icon: Messages, dot: true },
  { Icon: Zoom },
  { Icon: Teams, dot: true },
  { Icon: Mail },
  { Icon: Maps },
  { Icon: Photos },
  { Icon: FaceTime },
  { Icon: Calendar },
  { Icon: Reminders },
  { Icon: Notes, dot: true },
  { Icon: AppleTV },
  { Icon: Music },
  { Icon: Podcasts },
  { Icon: AppStore, dot: true },
  { Icon: QuickTime },
  { Icon: Telegram, dot: true },
  { Icon: Settings, dot: true, badge: "2" },
  { Icon: Chrome, dot: true },
];

const recent: App[] = [
  { Icon: Zalo, dot: true, badge: "5+" },
  { Icon: VKey, dot: true },
  { Icon: TextEdit, dot: true },
  { Icon: VSCode, dot: true },
  { Icon: Sublime, dot: true },
];

function DockItem({ Icon, dot, badge }: App) {
  return (
    <div className="relative flex w-[88px] flex-col items-center">
      <div className="flex h-[96px] shrink-0 items-center justify-center">
        <Icon />
      </div>
      {dot && <span className="-mt-[4px] size-2 shrink-0 rounded-full bg-[#0a0418]" />}
      {badge && (
        <span className="absolute right-0 top-[5px] flex size-8 items-center justify-center rounded-full bg-[#ea4d3f] font-['Inter'] text-[19px] leading-none tracking-[-1px] text-white">
          {badge}
        </span>
      )}
    </div>
  );
}

const DockRule = () => (
  <span className="flex w-10 justify-center pt-[12px]">
    <span className="h-[78px] w-[2px] bg-[#3b2263]" />
  </span>
);

function Dock() {
  return (
    <div className="mx-auto mt-[2px] flex h-[106px] w-[2468px] rounded-[34px] border-2 border-white/20 bg-[linear-gradient(90deg,#5f5673_0%,#5e5577_20%,#64568c_36%,#655490_58%,#8a55b3_67%,#8e56b8_77%,#7b57a6_85%,#665688_94%,#63578a_100%)] bg-origin-border px-1">
      {apps.map((a, i) => (
        <DockItem key={i} {...a} />
      ))}
      <DockRule />
      {recent.map((a, i) => (
        <DockItem key={i} {...a} />
      ))}
      <DockRule />
      <DockItem Icon={Trash} />
    </div>
  );
}

export default function App() {
  return (
    <div className="flex h-[1800px] w-[2880px] flex-col overflow-hidden bg-[linear-gradient(90deg,#07031c_0%,#0c0429_12%,#0d042b_28%,#160742_32%,#170845_46%,#210a4c_58%,#46126a_66%,#43116a_78%,#15073a_88%,#130539_100%)]">
      <MenuBar />
      <div className="relative flex h-[1632px] shrink-0 flex-col overflow-hidden rounded-[20px] bg-white font-['Liberation_Sans',Arial,sans-serif]">
        <TabStrip />
        <Toolbar />
        <SiteHeader />
        <div className="flex min-h-0 flex-1">
          <Sidebar />
          <Content />
        </div>
        <div className="pointer-events-none absolute inset-x-[150px] bottom-0 z-20 h-[80px] bg-[linear-gradient(transparent,rgba(0,0,0,0.14))] [mask-image:linear-gradient(90deg,transparent,#000_6%,#000_94%,transparent)]" />
      </div>
      <Dock />
    </div>
  );
}
